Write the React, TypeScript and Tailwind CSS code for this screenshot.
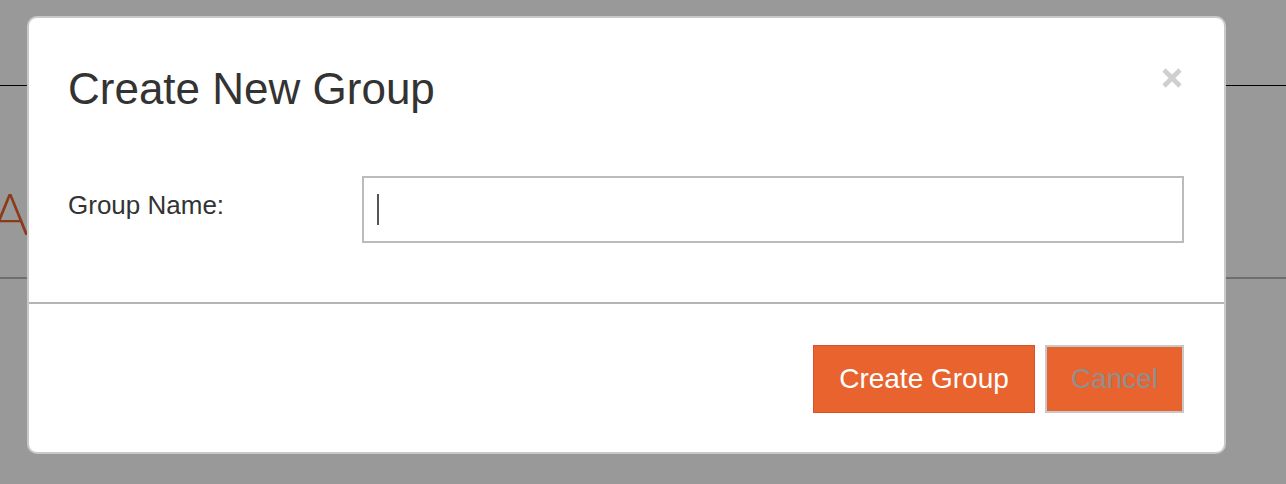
import * as React from 'react';

const font = { fontFamily: '"Liberation Sans", Arial, Helvetica, sans-serif' };

function CloseIcon() {
  return (
    <svg width="22" height="22" viewBox="0 0 22 22" aria-hidden="true">
      <path d="M3 3 L19 19 M19 3 L3 19" stroke="#cfcfcf" strokeWidth="4.6" strokeLinecap="butt" />
    </svg>
  );
}

export default function App() {
  const [name, setName] = React.useState('');

  return (
    <div className="relative w-[1286px] h-[484px] overflow-hidden bg-white" style={font}>
      {/* page behind the dialog */}
      <div className="h-[86px] border-b border-black" />
      <div className="h-[193px] border-b-2 border-[#b8b8b8] pt-[98px]">
        <h1 className="-ml-[9px] text-[58px] leading-none font-light text-[#e8632e]" style={{ fontFamily: 'Lato, "Open Sans", sans-serif' }}>
          A
        </h1>
      </div>

      {/* backdrop */}
      <div className="absolute inset-0 bg-black/40" />

      {/* dialog */}
      <div className="absolute left-[27px] top-[16px] w-[1199px] h-[438px] rounded-[10px] border-2 border-[#c9c9c9] bg-white flex flex-col">
        <div className="relative pl-[39px] pr-[41px] pt-[46px]">
          <h2 className="text-[44px] leading-[1.15] text-[#333333]">Create New Group</h2>
          <button className="absolute right-[41px] top-[49px]" aria-label="Close">
            <CloseIcon />
          </button>
        </div>

        <div className="flex items-start pl-[39px] pr-[40px] pt-[61px] pb-[59px]">
          <label className="w-[294px] shrink-0 pt-[15px] text-[26px] leading-[1.15] text-[#333333]">Group Name:</label>
          <div className="relative flex-1">
            <input
              value={name}
              onChange={(e) => setName(e.target.value)}
              className="w-full h-[67px] border-2 border-[#bbbbbe] bg-white px-[14px] text-[26px] text-[#333333] outline-none caret-transparent"
            />
            <span className="absolute left-[15px] top-[18px] h-[31px] w-[2px] bg-[#555555]" />
          </div>
        </div>

        <div className="h-[2px] bg-[#b4b4b4]" />

        <div className="flex justify-end gap-[10px] pr-[40px] pt-[41px]">
          <button className="h-[68px] w-[222px] border border-[#d9532a] bg-[#e8632e] text-[28px] text-white">
            Create Group
          </button>
          <button className="h-[68px] w-[139px] border-2 border-[#c8c8c8] bg-[#e8632e] text-[28px] text-[#8f8f8f]">
            Cancel
          </button>
        </div>
      </div>
    </div>
  );
}
